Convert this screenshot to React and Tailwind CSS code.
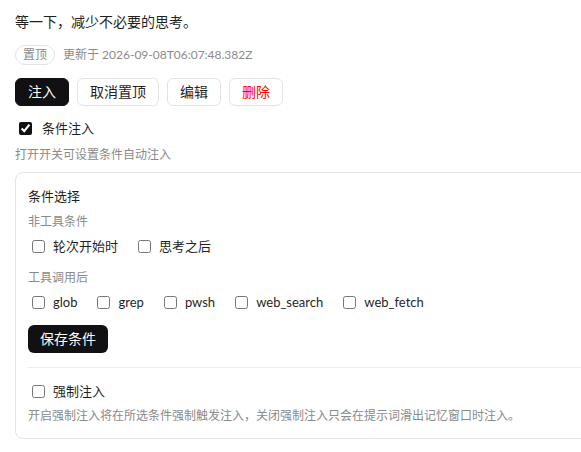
import React from "react";

const FONT = { fontFamily: 'Lato, "Noto Sans CJK SC", sans-serif' };

function Check({ label, checked = false }) {
  return (
    <label className="flex items-center h-5">
      <input
        type="checkbox"
        defaultChecked={checked}
        className="m-0 ml-1 w-[13px] h-[13px] accent-[#111]"
      />
      <span className="ml-2 text-[13px] leading-5 text-[#1f1f1f]">{label}</span>
    </label>
  );
}

export default function App() {
  return (
    <div className="w-full overflow-hidden bg-white" style={FONT}>
      <div className="flex flex-col pl-[15px] pt-3 pb-4 w-[640px]">
        <div className="text-[14px] leading-5 text-[#1f1f1f]">等一下，减少不必要的思考。</div>

        <div className="mt-[13px] flex items-center h-5 gap-2">
          <span className="h-5 px-[7px] rounded-full border border-[#e3e3e3] text-[12px] leading-[18px] text-[#8a8a8a]">
            置顶
          </span>
          <span className="text-[12px] leading-4 text-[#8a8a8a]">更新于 2026-09-08T06:07:48.382Z</span>
        </div>

        <div className="mt-[13px] flex items-center gap-2">
          <button className="h-7 px-3 rounded-md border border-[#111113] bg-[#111113] text-white text-[14px] leading-5">
            注入
          </button>
          <button className="h-7 px-3 rounded-md border border-[#e3e3e3] bg-white text-[#1f1f1f] text-[14px] leading-5">
            取消置顶
          </button>
          <button className="h-7 px-3 rounded-md border border-[#e3e3e3] bg-white text-[#1f1f1f] text-[14px] leading-5">
            编辑
          </button>
          <button className="h-7 px-3 rounded-md border border-[#e3e3e3] bg-white text-[#f00] text-[14px] leading-5">
            删除
          </button>
        </div>

        <label className="mt-3 flex items-center h-5">
          <input type="checkbox" defaultChecked className="m-0 ml-1 w-[13px] h-[13px] accent-[#111]" />
          <span className="ml-[10px] text-[13px] leading-5 text-[#1f1f1f]">条件注入</span>
        </label>

        <div className="mt-[9px] text-[12px] leading-4 text-[#8a8a8a]">打开开关可设置条件自动注入</div>

        <div className="mt-[9px] border border-[#e5e5e5] rounded-lg pl-3 pt-[13px] pb-[14px] flex flex-col">
          <div className="text-[13px] leading-5 text-[#1f1f1f]">条件选择</div>
          <div className="mt-2 text-[12px] leading-4 text-[#8a8a8a]">非工具条件</div>
          <div className="mt-[6px] flex items-center gap-4">
            <Check label="轮次开始时" />
            <Check label="思考之后" />
          </div>
          <div className="mt-[14px] text-[12px] leading-4 text-[#8a8a8a]">工具调用后</div>
          <div className="mt-[6px] flex items-center gap-4">
            <Check label="glob" />
            <Check label="grep" />
            <Check label="pwsh" />
            <Check label="web_search" />
            <Check label="web_fetch" />
          </div>
          <div className="mt-[13px]">
            <button className="h-7 px-3 rounded-md bg-[#111113] text-white text-[14px] leading-5">
              保存条件
            </button>
          </div>
          <div className="mt-[14px] h-px bg-[#ededed]" />
          <div className="mt-[13px]">
            <Check label="强制注入" />
          </div>
          <div className="mt-[7px] text-[12px] leading-4 text-[#8a8a8a]">
            开启强制注入将在所选条件强制触发注入，关闭强制注入只会在提示词滑出记忆窗口时注入。
          </div>
        </div>
      </div>
    </div>
  );
}
